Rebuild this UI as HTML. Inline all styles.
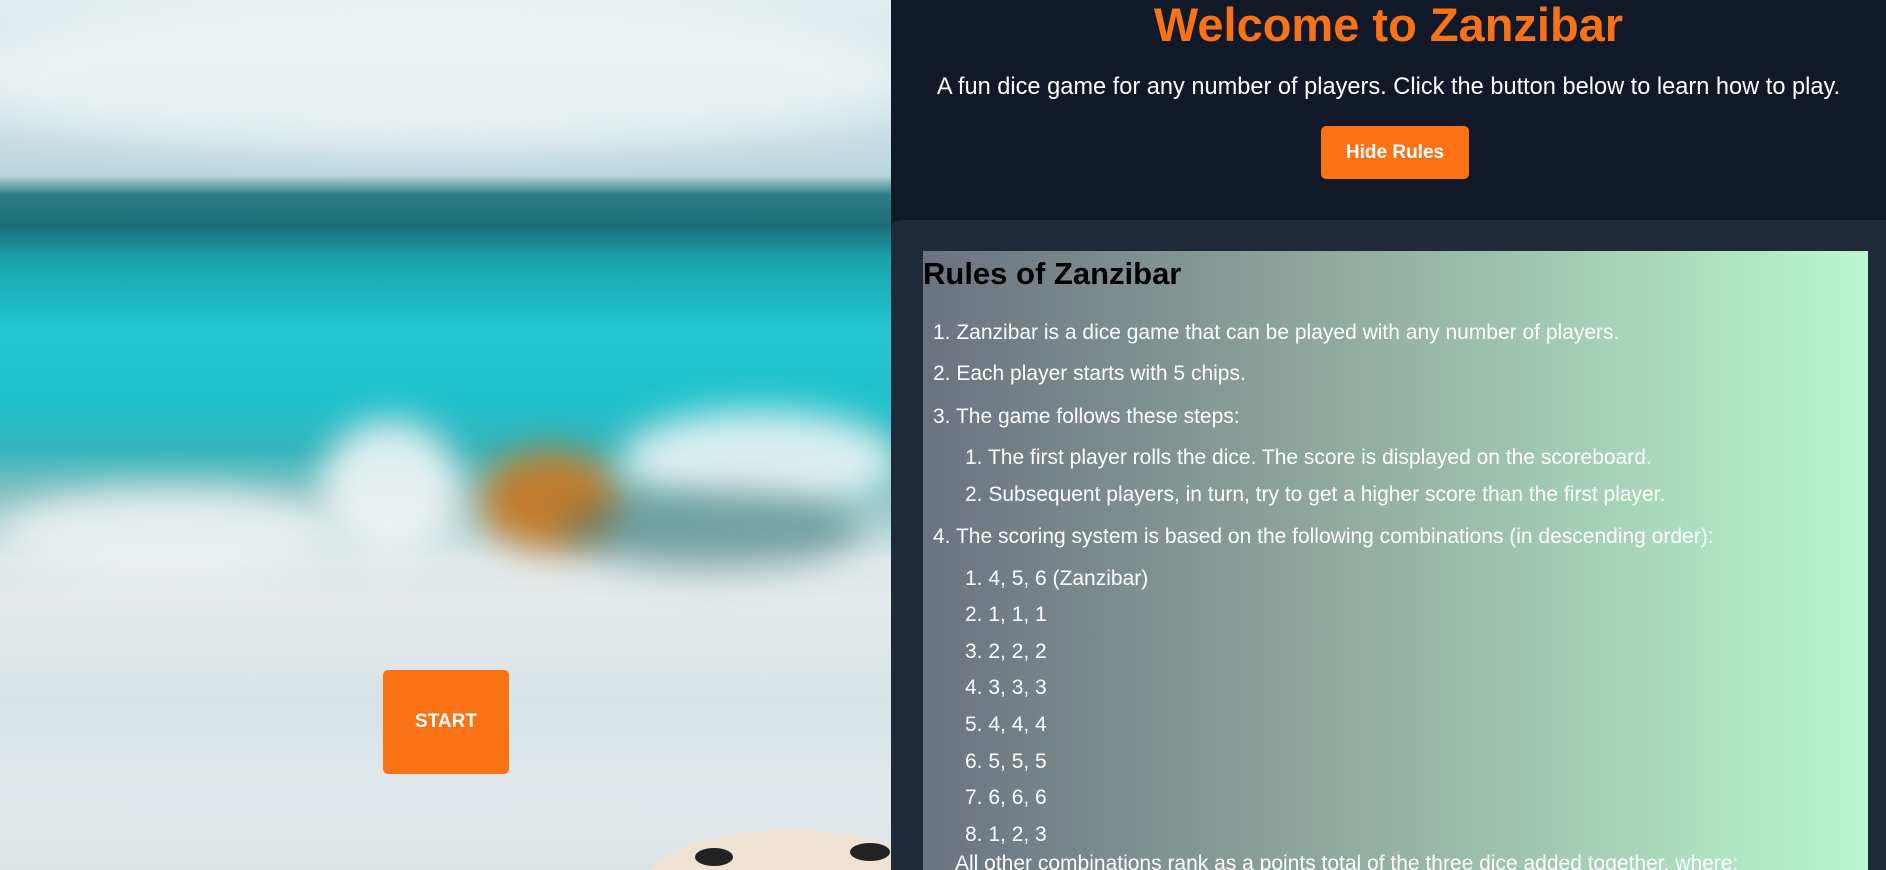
<!DOCTYPE html>
<html><head><meta charset="utf-8"><style>
*{margin:0;padding:0;box-sizing:border-box}
html,body{width:1886px;height:870px;overflow:hidden}
body{background:#111827;font-family:"Segoe UI","Liberation Sans",sans-serif}
#wrap{position:relative;width:1886px;height:870px;overflow:hidden}
#left{position:absolute;left:0;top:0;width:891px;height:870px;overflow:hidden;
background:linear-gradient(180deg,#e4eef0 0px,#cfe3e8 120px,#b9d6dc 175px,#2e7d86 195px,#1b6d78 225px,#1aa3ae 260px,#22c6d2 330px,#1fc0cc 400px,#35b5bc 450px,#8fc4c4 500px,#dfe8ea 560px,#e6ebec 600px,#d8e3e6 700px,#e2e9ec 800px,#dde4e6 870px)}
.blob{position:absolute;border-radius:50%;filter:blur(18px)}
#start{position:absolute;left:383px;top:670px;width:126px;height:104px;background:#f97316;border-radius:5px;color:#fff;font-weight:bold;font-size:19px;display:flex;align-items:center;justify-content:center}
h1{position:absolute;left:891px;width:995px;top:-3px;text-align:center;color:#f97316;font-size:47px;font-weight:bold}
#sub{position:absolute;left:891px;width:995px;top:74px;text-align:center;color:#fff;font-size:23.6px}
#hide{position:absolute;left:1321px;top:126px;width:148px;height:53px;background:#f97316;border-radius:5px;color:#fff;font-weight:bold;font-size:19px;display:flex;align-items:center;justify-content:center}
#panel{position:absolute;left:891px;top:220px;width:995px;height:650px;background:#1f2937;border-top-left-radius:10px}
#box{position:absolute;left:923px;top:251px;width:945px;height:619px;background:linear-gradient(90deg,#6b7280,#8ea59c 40%,#bbf7d0)}
#box h2{font-size:31px;font-weight:bold;color:#000;margin-top:4px;line-height:38px}
.it{position:absolute;white-space:nowrap;color:#fff;font-size:21px}
</style></head><body><div id="wrap">
<div id="left">
<div class="blob" style="left:-40px;top:0;width:950px;height:150px;background:#f2f6f7;opacity:.7"></div>
<div class="blob" style="left:480px;top:450px;width:140px;height:100px;background:#c8741c;opacity:.9"></div>
<div class="blob" style="left:320px;top:420px;width:140px;height:140px;background:#f3f6f6;opacity:.9"></div>
<div class="blob" style="left:620px;top:410px;width:280px;height:100px;background:#f6f9f9;opacity:.85"></div>
<div class="blob" style="left:0px;top:490px;width:340px;height:90px;background:#eef2f2;opacity:.9"></div>
<div class="blob" style="left:560px;top:490px;width:300px;height:80px;background:#2d6a6a;opacity:.5"></div>
<div style="position:absolute;left:640px;top:830px;width:300px;height:120px;border-radius:50%;background:#efe3d3"></div>
<div style="position:absolute;left:695px;top:848px;width:38px;height:18px;border-radius:50%;background:#222"></div>
<div style="position:absolute;left:850px;top:843px;width:40px;height:18px;border-radius:50%;background:#222"></div>
<div id="start">START</div>
</div>
<h1>Welcome to Zanzibar</h1>
<div id="sub">A fun dice game for any number of players. Click the button below to learn how to play.</div>
<div id="hide">Hide Rules</div>
<div id="panel"></div>
<div id="box"><h2>Rules of Zanzibar</h2></div>
<div class="it" style="left:933px;top:321px">1. Zanzibar is a dice game that can be played with any number of players.</div>
<div class="it" style="left:933px;top:362px">2. Each player starts with 5 chips.</div>
<div class="it" style="left:933px;top:405px">3. The game follows these steps:</div>
<div class="it" style="left:965px;top:446px">1. The first player rolls the dice. The score is displayed on the scoreboard.</div>
<div class="it" style="left:965px;top:483px">2. Subsequent players, in turn, try to get a higher score than the first player.</div>
<div class="it" style="left:933px;top:525px">4. The scoring system is based on the following combinations (in descending order):</div>
<div class="it" style="left:965px;top:567px">1. 4, 5, 6 (Zanzibar)</div>
<div class="it" style="left:965px;top:603px">2. 1, 1, 1</div>
<div class="it" style="left:965px;top:640px">3. 2, 2, 2</div>
<div class="it" style="left:965px;top:676px">4. 3, 3, 3</div>
<div class="it" style="left:965px;top:713px">5. 4, 4, 4</div>
<div class="it" style="left:965px;top:750px">6. 5, 5, 5</div>
<div class="it" style="left:965px;top:786px">7. 6, 6, 6</div>
<div class="it" style="left:965px;top:823px">8. 1, 2, 3</div>
<div class="it" style="left:955px;top:852px;height:18px;overflow:hidden">All other combinations rank as a points total of the three dice added together, where:</div>
</div></body></html>
